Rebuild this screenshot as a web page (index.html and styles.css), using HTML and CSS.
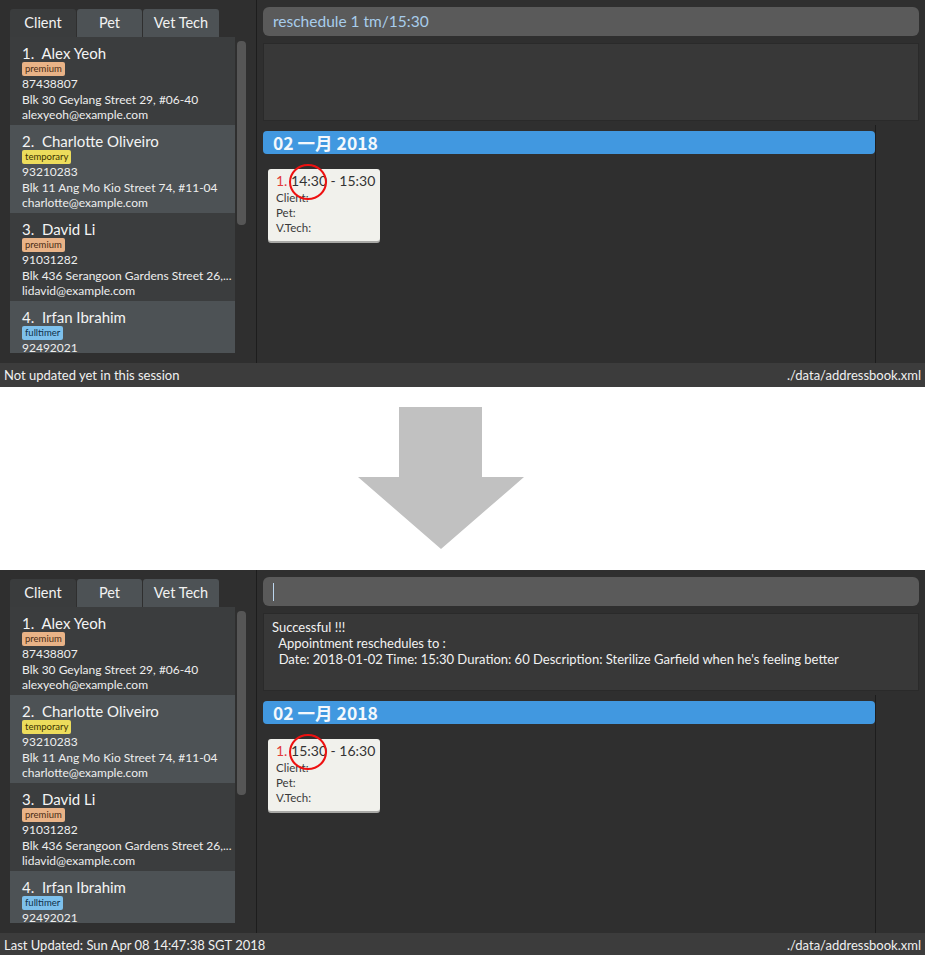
FILE: index.html
```html
<!DOCTYPE html>
<html>
<head>
<meta charset="utf-8">
<link rel="stylesheet" href="styles.css">
</head>
<body>
<div class="shot">
  <section class="app">
    <div class="main">
      <aside class="left">
        <div class="tabs">
          <div class="tab tab-client active">Client</div>
          <div class="tab tab-pet">Pet</div>
          <div class="tab tab-vet">Vet Tech</div>
        </div>
        <div class="listwrap">
          <div class="list">
            <div class="card even">
              <div class="name">1.  Alex Yeoh</div>
              <div class="tags"><span class="tag premium">premium</span></div>
              <div class="line">87438807</div>
              <div class="line">Blk 30 Geylang Street 29, #06-40</div>
              <div class="line">alexyeoh@example.com</div>
            </div>
            <div class="card odd">
              <div class="name">2.  Charlotte Oliveiro</div>
              <div class="tags"><span class="tag temporary">temporary</span></div>
              <div class="line">93210283</div>
              <div class="line">Blk 11 Ang Mo Kio Street 74, #11-04</div>
              <div class="line">charlotte@example.com</div>
            </div>
            <div class="card even">
              <div class="name">3.  David Li</div>
              <div class="tags"><span class="tag premium">premium</span></div>
              <div class="line">91031282</div>
              <div class="line">Blk 436 Serangoon Gardens Street 26,...</div>
              <div class="line">lidavid@example.com</div>
            </div>
            <div class="card odd last">
              <div class="name">4.  Irfan Ibrahim</div>
              <div class="tags"><span class="tag fulltimer">fulltimer</span></div>
              <div class="line">92492021</div>
            </div>
          </div>
          <div class="scroll"><div class="thumb"></div></div>
        </div>
      </aside>
      <div class="right">
        <div class="cmd">reschedule 1 tm/15:30</div>
        <div class="result"></div>
        <div class="calrow">
          <div class="cal">
            <div class="calhead">02 一月 2018</div>
            <div class="appt">
              <div class="time"><span class="idx">1.</span> 14:30 - 15:30</div>
              <div class="lbl">Client:</div>
              <div class="lbl">Pet:</div>
              <div class="lbl">V.Tech:</div>
              <div class="ring"></div>
            </div>
          </div>
        </div>
      </div>
    </div>
    <div class="status"><span>Not updated yet in this session</span><span>./data/addressbook.xml</span></div>
  </section>

  <div class="gap">
    <svg class="arrow" width="166" height="142" viewBox="0 0 166 142">
      <polygon points="41,0 124,0 124,70 166,70 83,142 0,70 41,70" fill="#c1c1c1"/>
    </svg>
  </div>

  <section class="app">
    <div class="main">
      <aside class="left">
        <div class="tabs">
          <div class="tab tab-client active">Client</div>
          <div class="tab tab-pet">Pet</div>
          <div class="tab tab-vet">Vet Tech</div>
        </div>
        <div class="listwrap">
          <div class="list">
            <div class="card even">
              <div class="name">1.  Alex Yeoh</div>
              <div class="tags"><span class="tag premium">premium</span></div>
              <div class="line">87438807</div>
              <div class="line">Blk 30 Geylang Street 29, #06-40</div>
              <div class="line">alexyeoh@example.com</div>
            </div>
            <div class="card odd">
              <div class="name">2.  Charlotte Oliveiro</div>
              <div class="tags"><span class="tag temporary">temporary</span></div>
              <div class="line">93210283</div>
              <div class="line">Blk 11 Ang Mo Kio Street 74, #11-04</div>
              <div class="line">charlotte@example.com</div>
            </div>
            <div class="card even">
              <div class="name">3.  David Li</div>
              <div class="tags"><span class="tag premium">premium</span></div>
              <div class="line">91031282</div>
              <div class="line">Blk 436 Serangoon Gardens Street 26,...</div>
              <div class="line">lidavid@example.com</div>
            </div>
            <div class="card odd last">
              <div class="name">4.  Irfan Ibrahim</div>
              <div class="tags"><span class="tag fulltimer">fulltimer</span></div>
              <div class="line">92492021</div>
            </div>
          </div>
          <div class="scroll"><div class="thumb"></div></div>
        </div>
      </aside>
      <div class="right">
        <div class="cmd"><span class="caret"></span></div>
        <div class="result">
          <div class="rline">Successful !!!</div>
          <div class="rline">  Appointment reschedules to :</div>
          <div class="rline">  Date: 2018-01-02 Time: 15:30 Duration: 60 Description: Sterilize Garfield when he's feeling better</div>
        </div>
        <div class="calrow">
          <div class="cal">
            <div class="calhead">02 一月 2018</div>
            <div class="appt">
              <div class="time"><span class="idx">1.</span> 15:30 - 16:30</div>
              <div class="lbl">Client:</div>
              <div class="lbl">Pet:</div>
              <div class="lbl">V.Tech:</div>
              <div class="ring"></div>
            </div>
          </div>
        </div>
      </div>
    </div>
    <div class="status short"><span>Last Updated: Sun Apr 08 14:47:38 SGT 2018</span><span>./data/addressbook.xml</span></div>
  </section>
</div>
</body>
</html>
```

FILE: styles.css
```css
html, body {
  margin: 0;
  padding: 0;
  overflow: hidden;
  background: #ffffff;
}

body {
  font-family: Lato, "Open Sans", "Noto Sans CJK SC", sans-serif;
  color: #ffffff;
}

.shot {
  width: 925px;
}

.app {
  height: 387px;
  display: flex;
  flex-direction: column;
  background: #2f2f2f;
}

.main {
  flex: 1;
  display: flex;
  min-height: 0;
}

.left {
  width: 257px;
  box-sizing: border-box;
  border-right: 1px solid #1d1d1d;
  padding: 9px 0 0 10px;
  display: flex;
  flex-direction: column;
}

.tabs {
  display: flex;
  gap: 1px;
  height: 28px;
}

.tab {
  height: 28px;
  line-height: 28px;
  text-align: center;
  font-size: 14.5px;
  color: #f2f2f2;
  border-radius: 3px 3px 0 0;
  background: #4d5255;
}

.tab.active {
  background: #3a3c3d;
}

.tab-client { width: 66px; }
.tab-pet { width: 65px; }
.tab-vet { width: 76px; }

.listwrap {
  display: flex;
  height: 316px;
}

.list {
  width: 225px;
  height: 316px;
  overflow: hidden;
}

.card {
  height: 88px;
  box-sizing: border-box;
  padding: 7px 8px 0 12px;
  overflow: hidden;
}

.card.last {
  height: 52px;
}

.card.even { background: #3b3d3e; }
.card.odd { background: #4d5255; }

.name {
  white-space: pre;
  font-size: 15px;
  line-height: 18px;
  color: #f4f4f4;
}

.tags {
  height: 14px;
  display: flex;
}

.tag {
  display: inline-block;
  height: 14px;
  line-height: 14px;
  font-size: 9.5px;
  padding: 0 3px;
  border-radius: 2px;
  color: #2b2b2b;
}

.tag.premium { background: #e9b387; color: #4a2c14; }
.tag.temporary { background: #ecdc5c; color: #3a3300; }
.tag.fulltimer { background: #7dc0ec; color: #10304a; }

.line {
  font-size: 12px;
  line-height: 15.5px;
  color: #eeeeee;
  white-space: nowrap;
}

.scroll {
  margin-left: 2px;
  width: 9px;
  padding-top: 4px;
}

.thumb {
  width: 9px;
  height: 184px;
  border-radius: 4px;
  background: #565656;
}

.right {
  flex: 1;
  display: flex;
  flex-direction: column;
  min-width: 0;
}

.cmd {
  margin: 7px 6px 0 6px;
  height: 29px;
  line-height: 29px;
  border-radius: 6px;
  background: #5a5a5a;
  padding-left: 10px;
  font-size: 15.5px;
  color: #a8cdec;
  display: flex;
  align-items: center;
}

.caret {
  display: block;
  width: 1px;
  height: 18px;
  background: #bcd6ee;
}

.result {
  margin: 7px 6px 0 6px;
  height: 78px;
  box-sizing: border-box;
  background: #383838;
  border: 1px solid #2a2a2a;
  padding: 5px 8px 0 8px;
}

.rline {
  white-space: pre;
  font-size: 13px;
  line-height: 16px;
  color: #f2f2f2;
}

.calrow {
  flex: 1;
  display: flex;
  margin-top: 4px;
}

.cal {
  width: 619px;
  box-sizing: border-box;
  border-right: 1px solid #1d1d1d;
  padding-left: 6px;
  padding-top: 6px;
}

.calhead {
  height: 23px;
  line-height: 23px;
  border-radius: 4px;
  background: #4198e0;
  padding-left: 10px;
  font-family: "Noto Sans CJK SC", "Noto Sans", sans-serif;
  font-weight: bold;
  font-size: 17.5px;
  color: #f4f8fc;
}

.appt {
  position: relative;
  margin: 15px 0 0 5px;
  width: 112px;
  box-sizing: border-box;
  padding: 3px 0 6px 8px;
  background: #f1f1ec;
  border-radius: 3px;
  box-shadow: 0 2px 0 #a9a9a6;
}

.time {
  font-size: 14px;
  line-height: 18px;
  color: #333333;
  white-space: nowrap;
}

.idx {
  color: #e23b3b;
}

.lbl {
  font-size: 11.5px;
  line-height: 15px;
  color: #3a3a3a;
}

.ring {
  position: absolute;
  left: 21px;
  top: -5px;
  width: 34px;
  height: 32px;
  border: 2px solid #ee1111;
  border-radius: 50%;
}

.status {
  height: 24px;
  line-height: 24px;
  background: #3c3c3c;
  display: flex;
  justify-content: space-between;
  padding: 0 4px;
  font-size: 13px;
  color: #f0f0f0;
  white-space: nowrap;
}

.gap {
  height: 183px;
  background: #ffffff;
  display: flex;
  padding-left: 358px;
  padding-top: 20px;
  box-sizing: border-box;
}

.arrow {
  display: block;
}
```
